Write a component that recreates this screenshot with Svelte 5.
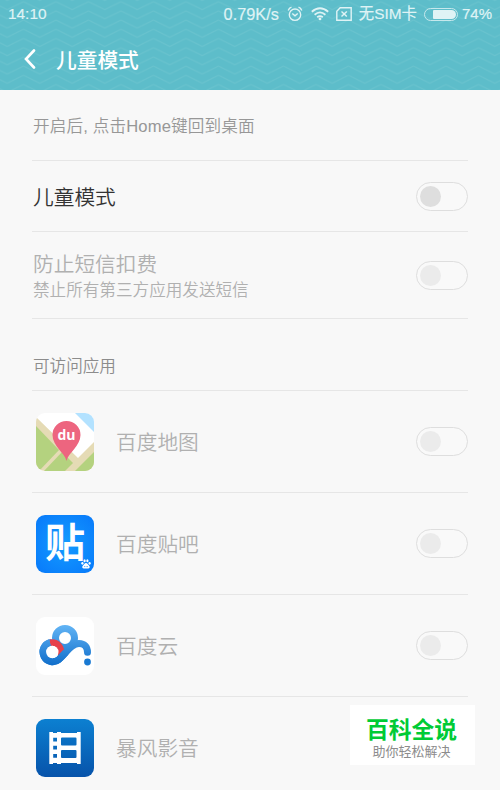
<script>
  let switches = $state({ child: false, sms: false, map: false, tieba: false, cloud: false, video: false });

  const apps = [
    { id: "map", name: "百度地图" },
    { id: "tieba", name: "百度贴吧" },
    { id: "cloud", name: "百度云" },
    { id: "video", name: "暴风影音" },
  ];

  const toggle = (id) => {
    switches[id] = !switches[id];
  };
</script>

{#snippet switchButton(id, label, dim)}
  <button
    class="switch"
    class:dim
    class:on={switches[id]}
    role="switch"
    aria-checked={switches[id]}
    aria-label={label}
    disabled={dim}
    onclick={() => toggle(id)}
  >
    <span class="knob"></span>
  </button>
{/snippet}

<div class="phone">
  <header>
    <svg class="waves" width="500" height="90" aria-hidden="true">
      <defs>
        <pattern id="zigzag" x="7.25" y="1.7" width="32.5" height="9.2" patternUnits="userSpaceOnUse">
          <path d="M-16.25 0L0 8L16.25 0L32.5 8L48.75 0M-16.25 9.2L0 17.2L16.25 9.2L32.5 17.2" />
        </pattern>
      </defs>
      <rect width="500" height="90" fill="url(#zigzag)" />
    </svg>

    <div class="status">
      <span class="time">14:10</span>
      <span class="speed">0.79K/s</span>
      <svg class="alarm" width="16" height="16" viewBox="0 0 16 16">
        <circle cx="8" cy="8.7" r="5.7" />
        <path d="M5.3 7.4L8 9.8L10.7 7.4M1.2 4.4Q2.2 2 4.5 1.2M14.8 4.4Q13.8 2 11.5 1.2" />
      </svg>
      <svg class="wifi" width="18" height="14" viewBox="0 0 18 14">
        <path d="M.8 4.8Q9 -2.2 17.2 4.8M3.6 7.7Q9 3 14.4 7.7M6.2 10.3Q9 8 11.8 10.3" />
        <circle cx="9" cy="11.9" r="1.4" />
      </svg>
      <svg class="sim" width="16" height="14" viewBox="0 0 16 14">
        <path d="M4.2 .8H15.2V13.2H.8V4.2ZM5.5 4.4L10.8 9.6M10.8 4.4L5.5 9.6" />
      </svg>
      <span class="carrier">无SIM卡</span>
      <span class="battery"><span class="level"></span></span>
      <span class="percent">74%</span>
    </div>

    <div class="title-bar">
      <svg width="12" height="20" viewBox="0 0 12 20">
        <path d="M10 1.5L2 10L10 18.5" />
      </svg>
      <h1>儿童模式</h1>
    </div>
  </header>

  <main>
    <p class="hint">开启后, 点击Home键回到桌面</p>

    <div class="row child">
      <span class="name">儿童模式</span>
      {@render switchButton("child", "儿童模式", false)}
    </div>

    <div class="row sms">
      <div>
        <div class="name">防止短信扣费</div>
        <div class="desc">禁止所有第三方应用发送短信</div>
      </div>
      {@render switchButton("sms", "防止短信扣费", true)}
    </div>

    <h2>可访问应用</h2>

    {#each apps as app (app.id)}
      <div class="row app">
        <div class="icon {app.id}">
          {#if app.id === "map"}
            <svg width="58" height="58" viewBox="0 0 58 58">
              <rect width="58" height="58" fill="#fff" />
              <path d="M39 0H58V19Z" fill="#b3e2ff" />
              <path d="M0 4L42 45L58 29V58H0Z" fill="#e5dbb5" />
              <path d="M0 13L23 37L3 58H0Z" fill="#b4d27f" />
              <path d="M26 39L37 50L29 58H8Z" fill="#b4d27f" />
              <path d="M58 39V58H39Z" fill="#b4d27f" />
              <path d="M30.5 48C29 40 16.5 33 16.5 22A14 14 0 0 1 44.5 22C44.5 33 32 40 30.5 48Z" fill="#ed657f" />
              <text x="30.5" y="27" text-anchor="middle">du</text>
            </svg>
          {:else if app.id === "tieba"}
            <span class="tie">贴</span>
            <svg class="paw" width="10" height="10" viewBox="0 0 10 10">
              <ellipse cx="1.4" cy="4.3" rx="1.1" ry="1.4" />
              <ellipse cx="3.6" cy="1.8" rx="1.1" ry="1.5" />
              <ellipse cx="6.4" cy="1.8" rx="1.1" ry="1.5" />
              <ellipse cx="8.6" cy="4.3" rx="1.1" ry="1.4" />
              <path d="M5 4C6.5 4 7 5.6 8.2 6.7C9.5 8 8.5 9.8 6.8 9.5H3.2C1.5 9.8 .5 8 1.8 6.7C3 5.6 3.5 4 5 4Z" />
              <path class="line" d="M3.2 7.6H4.3M5.5 7.6H6.8" />
            </svg>
          {:else if app.id === "cloud"}
            <svg width="58" height="58" viewBox="0 0 58 58">
              <defs>
                <linearGradient id="cloudBlue" gradientUnits="userSpaceOnUse" x1="0" y1="8" x2="0" y2="48">
                  <stop offset="0" stop-color="#62b4f5" />
                  <stop offset="1" stop-color="#116fcb" />
                </linearGradient>
              </defs>
              <g fill="none" stroke="url(#cloudBlue)" stroke-width="7">
                <circle cx="29" cy="21" r="9.5" />
                <path
                  d="M14 25.6A9.7 9.7 0 1 0 23 42.3C30 37 34 26.5 43 26.5C48.5 26.5 51.5 30 51.5 35.3"
                  stroke-linecap="round"
                />
              </g>
              <path d="M14 25.6C21 24.5 26.5 30 25 39" fill="none" stroke="#e7404a" stroke-width="6.5" />
              <path d="M14 25.6A9.7 9.7 0 1 0 23 42.3L30 35" fill="none" stroke="url(#cloudBlue)" stroke-width="7" />
              <circle cx="16.3" cy="35" r="6.2" fill="#fff" />
              <circle cx="51.5" cy="45" r="3.4" fill="#1979d2" />
            </svg>
          {:else}
            <svg width="58" height="58" viewBox="0 0 58 58">
              <path
                fill="#fff"
                fill-rule="evenodd"
                d="M13.3 13H17V14H21V13H25V14H41V13H44.7V45H41V44H25V45H21V44H17V45H13.3ZM17.2 18.7V22.4H21V18.7ZM17.2 26.7V30.4H21V26.7ZM17.2 35V38.8H21V35ZM26 18.5Q25 18.5 25 19.5V25.5Q25 26.5 26 26.5H39.5Q40.5 26.5 40.5 25.5V19.5Q40.5 18.5 39.5 18.5ZM26 31Q25 31 25 32V38Q25 39 26 39H39.5Q40.5 39 40.5 38V32Q40.5 31 39.5 31Z"
              />
            </svg>
          {/if}
        </div>
        <span class="name">{app.name}</span>
        {#if app.id !== "video"}
          {@render switchButton(app.id, app.name, true)}
        {/if}
      </div>
    {/each}
  </main>

  <aside class="badge">
    <strong>百科全说</strong>
    <span>助你轻松解决</span>
  </aside>
</div>

<style>
  :global(body) {
    margin: 0;
    background: #f8f8f8;
  }

  .phone {
    position: relative;
    width: 500px;
    height: 790px;
    overflow: hidden;
    background: #f8f8f8;
    color: #a8a8a8;
    font-family: "Liberation Sans", "Noto Sans CJK SC", sans-serif;
  }

  header {
    position: relative;
    height: 90px;
    background: #5dbdca;
    color: #fff;
  }

  .waves {
    position: absolute;
    inset: 0;
  }

  .waves path {
    fill: none;
    stroke: #6ac3ce;
    stroke-width: 1;
  }

  .status {
    position: relative;
    display: flex;
    align-items: center;
    height: 28px;
    padding: 0 8px;
    font-size: 15.4px;
    line-height: 28px;
    color: #dff3f5;
    -webkit-text-stroke: 0.2px #dff3f5;
  }

  .status svg {
    flex: none;
    fill: none;
    stroke: #dff3f5;
    stroke-width: 1.4;
  }

  .time {
    flex: 1;
  }

  .speed {
    font-size: 16.3px;
  }

  .status .alarm {
    margin-left: 8px;
  }

  .status .wifi {
    margin-left: 8px;
    stroke-width: 1.8;
  }

  .wifi circle {
    fill: #dff3f5;
    stroke: none;
  }

  .sim {
    margin-left: 7px;
  }

  .carrier {
    margin-left: 7px;
  }

  .battery {
    box-sizing: border-box;
    display: flex;
    justify-content: flex-end;
    width: 34px;
    height: 13px;
    margin: 0 4px 0 7px;
    padding: 1px;
    border: 1px solid #c6e8ec;
    border-radius: 7px;
  }

  .level {
    width: 23px;
    border-radius: 1px 5px 5px 1px;
    background: #dff3f5;
  }

  .percent {
    font-size: 15px;
  }

  .title-bar {
    position: relative;
    display: flex;
    align-items: center;
    gap: 20px;
    height: 62px;
    padding-left: 24px;
  }

  .title-bar svg {
    fill: none;
    stroke: #fff;
    stroke-width: 2.6;
    stroke-linecap: round;
  }

  h1 {
    margin: 0;
    padding-top: 4px;
    font-size: 20.7px;
    font-weight: 500;
    line-height: 30px;
  }

  main {
    padding: 0 32px;
  }

  .hint {
    box-sizing: border-box;
    height: 71px;
    margin: 0;
    padding-left: 1px;
    border-bottom: 1px solid #e6e6e6;
    font-size: 16.6px;
    line-height: 73px;
    font-weight: 350;
    letter-spacing: 0.15px;
    color: #979797;
  }

  h2 {
    box-sizing: border-box;
    height: 72px;
    margin: 0;
    padding: 35px 0 0 1px;
    border-bottom: 1px solid #e6e6e6;
    font-size: 16.6px;
    font-weight: 350;
    line-height: 25px;
    color: #8c8c8c;
  }

  .row {
    box-sizing: border-box;
    display: flex;
    align-items: center;
    justify-content: space-between;
    border-bottom: 1px solid #e6e6e6;
  }

  .name {
    padding-top: 2px;
    font-size: 20.7px;
    font-weight: 350;
    line-height: 28px;
  }

  .child {
    height: 71px;
    color: #333;
  }

  .child .name,
  .sms .name,
  .desc {
    padding-left: 1px;
  }

  .child .name {
    padding-top: 3px;
  }

  .sms {
    height: 87px;
    color: #b0b0b0;
  }

  .desc {
    font-size: 16.6px;
    font-weight: 350;
    line-height: 23px;
  }

  .app {
    height: 102px;
    color: #b0b0b0;
  }

  .app .name {
    flex: 1;
    margin-left: 22px;
  }

  .switch {
    box-sizing: border-box;
    display: flex;
    align-items: center;
    width: 52px;
    height: 29px;
    padding: 0 3px;
    border: 1px solid #dedede;
    border-radius: 15px;
    background: #f9f9f9;
  }

  .knob {
    width: 21px;
    height: 21px;
    border-radius: 50%;
    background: #dedede;
  }

  .dim .knob {
    background: #ebebeb;
  }

  .on {
    justify-content: flex-end;
  }

  .icon {
    position: relative;
    width: 58px;
    height: 58px;
    margin-left: 4px;
    overflow: hidden;
    border-radius: 9px;
  }

  .icon text {
    fill: #fff;
    font: 700 14px "Open Sans", sans-serif;
  }

  .tieba {
    background: radial-gradient(#149cff, #0879fa);
  }

  .tie {
    display: block;
    margin-left: 9px;
    color: #fff;
    font-size: 40px;
    font-weight: 700;
    line-height: 56px;
  }

  .paw {
    position: absolute;
    right: 3px;
    bottom: 4px;
    fill: #fff;
  }

  .line {
    stroke: #1488fb;
    stroke-width: 0.8;
  }

  .cloud {
    background: #fff;
  }

  .video {
    background: linear-gradient(#0c80d1, #0753aa);
  }

  .icon > svg:not(.paw) {
    display: block;
  }

  .badge {
    position: absolute;
    left: 350px;
    top: 705px;
    box-sizing: border-box;
    display: flex;
    flex-direction: column;
    align-items: center;
    width: 125px;
    height: 60px;
    padding-right: 2px;
    background: #fff;
  }

  .badge strong {
    margin-top: 11px;
    color: #00cb35;
    font-size: 22.8px;
    font-weight: 700;
    line-height: 28px;
  }

  .badge span {
    color: #8c8c8c;
    font-size: 13px;
    line-height: 15px;
  }
</style>
